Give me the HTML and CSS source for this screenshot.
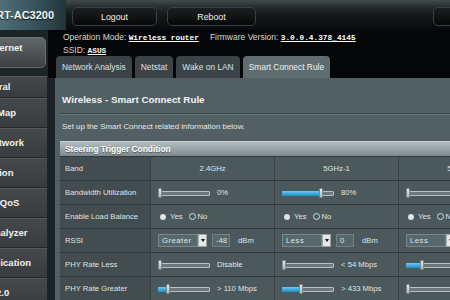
FILE: index.html
```html
<!DOCTYPE html>
<html>
<head>
<meta charset="utf-8">
<title>Smart Connect Rule</title>
<link rel="stylesheet" href="styles.css">
</head>
<body>
<div class="app">
  <header class="topbar">
    <div class="brand"><span>RT-AC3200</span></div>
    <button class="tbtn logout">Logout</button>
    <button class="tbtn reboot">Reboot</button>
    <div class="spacer"></div>
    <button class="tbtn lang"></button>
  </header>
  <div class="body">
    <aside class="side">
      <div class="inet">Internet</div>
      <nav class="menu">
        <div class="mhead">General</div>
        <div class="mitem">Network Map</div>
        <div class="mitem">Guest Network</div>
        <div class="mitem">AiProtection</div>
        <div class="mitem">Adaptive QoS</div>
        <div class="mitem">Traffic Analyzer</div>
        <div class="mitem">USB Application</div>
        <div class="mitem">AiCloud 2.0</div>
      </nav>
    </aside>
    <main class="main">
      <div class="info">
        <div>Operation Mode: <b class="lnk">Wireless router</b><span class="fw">Firmware Version: </span><b class="lnk">3.0.0.4.378_4145</b></div>
        <div>SSID: <b class="lnk">ASUS</b></div>
      </div>
      <div class="tabs">
        <div class="tab">Network Analysis</div>
        <div class="tab">Netstat</div>
        <div class="tab">Wake on LAN</div>
        <div class="tab on">Smart Connect Rule</div>
      </div>
      <section class="panel">
        <h1 class="title">Wireless - Smart Connect Rule</h1>
        <div class="rule"></div>
        <p class="desc">Set up the Smart Connect related information below.</p>
        <div class="thead">Steering Trigger Condition</div>
        <div class="grid">
          <div class="c lbl">Band</div>
          <div class="c v ctr">2.4GHz</div>
          <div class="c v ctr">5GHz-1</div>
          <div class="c v ctr">5GHz-2</div>

          <div class="c lbl">Bandwidth Utilization</div>
          <div class="c v"><div class="sl"><div class="tr"></div><div class="fill" style="width:0px"></div><div class="th" style="left:0px"></div></div><span class="val">0%</span></div>
          <div class="c v"><div class="sl"><div class="tr"></div><div class="fill" style="width:38px"></div><div class="th" style="left:37px"></div></div><span class="val">80%</span></div>
          <div class="c v"><div class="sl"><div class="tr"></div><div class="fill" style="width:0px"></div><div class="th" style="left:0px"></div></div><span class="val">0%</span></div>

          <div class="c lbl">Enable Load Balance</div>
          <div class="c v rad"><span class="rd"></span>Yes<span class="rd2"></span>No</div>
          <div class="c v rad"><span class="rd"></span>Yes<span class="rd2"></span>No</div>
          <div class="c v rad"><span class="rd"></span>Yes<span class="rd2"></span>No</div>

          <div class="c lbl">RSSI</div>
          <div class="c v"><div class="sel"><span>Greater</span><i></i></div><div class="inp">-48</div><span class="unit">dBm</span></div>
          <div class="c v"><div class="sel"><span>Less</span><i></i></div><div class="inp">0</div><span class="unit">dBm</span></div>
          <div class="c v"><div class="sel"><span>Less</span><i></i></div><div class="inp">0</div><span class="unit">dBm</span></div>

          <div class="c lbl">PHY Rate Less</div>
          <div class="c v"><div class="sl"><div class="tr"></div><div class="fill" style="width:0px"></div><div class="th" style="left:0px"></div></div><span class="val">Disable</span></div>
          <div class="c v"><div class="sl"><div class="tr"></div><div class="fill" style="width:0px"></div><div class="th" style="left:0px"></div></div><span class="val">&lt; 54 Mbps</span></div>
          <div class="c v"><div class="sl"><div class="tr"></div><div class="fill" style="width:15px"></div><div class="th" style="left:14px"></div></div><span class="val">&lt; 54 Mbps</span></div>

          <div class="c lbl">PHY Rate Greater</div>
          <div class="c v"><div class="sl"><div class="tr"></div><div class="fill" style="width:9px"></div><div class="th" style="left:8px"></div></div><span class="val">&gt; 110 Mbps</span></div>
          <div class="c v"><div class="sl"><div class="tr"></div><div class="fill" style="width:18px"></div><div class="th" style="left:17px"></div></div><span class="val">&gt; 433 Mbps</span></div>
          <div class="c v"><div class="sl"><div class="tr"></div><div class="fill" style="width:0px"></div><div class="th" style="left:0px"></div></div><span class="val">&gt; 433 Mbps</span></div>
        </div>
      </section>
    </main>
  </div>
</div>
</body>
</html>
```

FILE: styles.css
```css
* { box-sizing: border-box; margin: 0; padding: 0; }
html, body { width: 450px; height: 300px; overflow: hidden; }
body {
  background: #1b2326;
  font-family: "Liberation Sans", Arial, sans-serif;
  color: #e3e8e8;
}
.app { display: flex; flex-direction: column; height: 300px; }

/* top bar */
.topbar {
  height: 30px;
  flex: none;
  display: flex;
  align-items: flex-start;
  background: linear-gradient(180deg, #444b4d 0, #2b3133 6px, #16191a 14px, #090a0b 30px);
}
.brand {
  width: 66px;
  height: 30px;
  flex: none;
  display: flex;
  align-items: center;
  overflow: hidden;
  background: linear-gradient(90deg, #4f6e75 0, #37525b 55%, #22333a 100%);
}
.brand span {
  margin-left: -4px;
  font-weight: bold;
  font-size: 11px;
  color: #f4f7f7;
  white-space: nowrap;
  text-shadow: 0 1px 1px #0d1416;
}
.tbtn {
  flex: none;
  margin-top: 7px;
  height: 19px;
  border: 1px solid #3a4043;
  border-radius: 5px;
  background: linear-gradient(#1d2022, #060707);
  color: #f2f2f2;
  font: 8.8px "Liberation Sans", Arial, sans-serif;
}
.logout { margin-left: 6px; width: 85px; }
.reboot { margin-left: 10px; width: 89px; }
.spacer { flex: 1; }
.lang { width: 30px; margin-right: -13px; }

.body { flex: 1; display: flex; min-height: 0; }

/* sidebar */
.side {
  width: 48px;
  flex: none;
  overflow: hidden;
  background: #1b2528;
}
.inet {
  margin: 7px 0 0 -36px;
  width: 82px;
  height: 31px;
  border-radius: 5px;
  border: 1px solid #6a6f71;
  background: linear-gradient(#62676a, #3c4042);
  text-align: center;
  padding-top: 4px;
  font-weight: bold;
  font-size: 9.5px;
  line-height: 11px;
  color: #f3f3f3;
}
.menu { margin-top: 8px; width: 47px; }
.mhead, .mitem {
  margin-left: -43px;
  width: 90px;
  white-space: nowrap;
  font-weight: bold;
  font-size: 9.5px;
  color: #f1f1f1;
  display: flex;
  align-items: center;
  border-bottom: 1px solid #242729;
  box-shadow: inset 0 1px 0 #54585a;
  background: linear-gradient(#46494b, #393c3e);
}
.mhead { height: 22px; padding-left: 18px; }
.mitem { height: 30px; }

/* main */
.main {
  flex: 1;
  min-width: 0;
  display: flex;
  flex-direction: column;
  background: #1b2326;
}
.info {
  height: 26px;
  flex: none;
  background: #050607;
  padding: 1px 0 0 15px;
  font-size: 8.5px;
  line-height: 12px;
  color: #d6dadb;
  white-space: nowrap;
}
.lnk {
  font-family: "Liberation Mono", monospace;
  font-size: 7.8px;
  font-weight: bold;
  text-decoration: underline;
  color: #ffffff;
}
.fw { margin-left: 11px; }

.tabs {
  height: 22px;
  flex: none;
  display: flex;
  gap: 3px;
  padding-left: 8px;
  background: #050607;
}
.tab {
  padding: 0 6px;
  line-height: 22px;
  font-size: 8.4px;
  background: #3b4346;
  color: #dde2e2;
  border-radius: 4px 4px 0 0;
  white-space: nowrap;
}
.tab.on { background: #5f6d70; color: #eef2f2; }

.panel {
  flex: 1;
  margin-left: 7px;
  background: #526063;
  padding: 15px 0 0 5px;
  overflow: hidden;
}
.title {
  margin-left: 2px;
  font-weight: bold;
  font-size: 9.8px;
  line-height: 14px;
  color: #f0f3f3;
}
.rule {
  margin-top: 6px;
  height: 2px;
  border-top: 1px solid #3a4548;
  border-bottom: 1px solid #67777a;
}
.desc {
  margin: 6px 0 0 2px;
  font-size: 7.9px;
  line-height: 12px;
  color: #e2e7e7;
}
.thead {
  margin-top: 8px;
  width: 462px;
  height: 15px;
  padding-left: 5px;
  line-height: 14px;
  font-weight: bold;
  font-size: 8.4px;
  color: #ffffff;
  text-shadow: 0 1px 0 #55605f;
  background: linear-gradient(#b2bcbe, #7d8a8d);
  border-top: 1px solid #c6cfd0;
}

.grid {
  width: 462px;
  display: grid;
  grid-template-columns: 90px 124px 124px 124px;
  grid-auto-rows: 24px;
}
.c {
  display: flex;
  align-items: center;
  border-top: 1px solid #2f383a;
  font-size: 7.7px;
  color: #dfe5e5;
  white-space: nowrap;
}
.lbl { background: #434c4f; padding-left: 5px; }
.v { background: #4c595c; border-left: 1px solid #364144; padding-left: 7px; }
.v.ctr { justify-content: center; padding-left: 0; }

/* slider */
.sl { position: relative; width: 52px; height: 10px; flex: none; }
.tr {
  position: absolute;
  left: 0; right: 0; top: 3px;
  height: 5px;
  background: #6d787a;
  border: 1px solid #b8c0c1;
  border-radius: 1px;
}
.fill {
  position: absolute;
  left: 0; top: 3px;
  height: 5px;
  background: linear-gradient(#6acbf2, #1e8cc6);
  border-radius: 1px;
}
.th {
  position: absolute;
  top: 0;
  width: 4px;
  height: 10px;
  background: linear-gradient(#e8ebeb, #b3b9b9);
  border: 1px solid #7d8789;
  border-radius: 1px;
}
.val { margin-left: 7px; }

/* radios */
.rad { padding-left: 9px; }
.rd {
  width: 6px; height: 6px;
  flex: none;
  border-radius: 50%;
  background: #dde2e2;
  margin-right: 4px;
}
.rd2 {
  width: 7px; height: 7px;
  flex: none;
  border-radius: 50%;
  border: 1.5px solid #c8e2e7;
  margin: 0 2px 0 6px;
}

/* select + input */
.sel { display: flex; height: 13px; flex: none; }
.sel span {
  width: 40px;
  background: #57686b;
  border: 1px solid #788789;
  padding-left: 3px;
  line-height: 11px;
  letter-spacing: 0.5px;
}
.sel i {
  width: 9px;
  background: #e6e8e8;
  border: 1px solid #9aa4a5;
  display: flex;
  align-items: center;
  justify-content: center;
}
.sel i::after {
  content: "";
  border-left: 2.5px solid transparent;
  border-right: 2.5px solid transparent;
  border-top: 3px solid #111;
}
.inp {
  flex: none;
  margin-left: 5px;
  width: 18px;
  height: 13px;
  background: #56676a;
  border: 1px solid #728184;
  line-height: 11px;
  padding-left: 3px;
}
.unit { margin-left: 8px; }
```
